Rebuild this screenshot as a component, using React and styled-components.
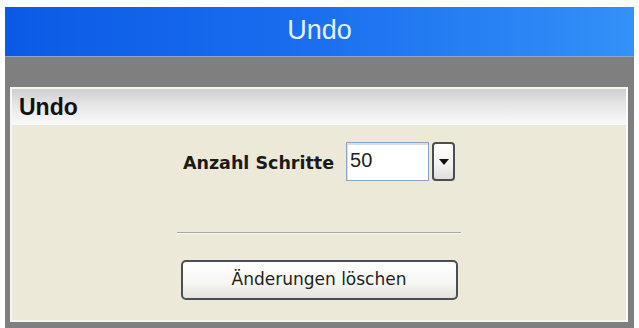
import React from "react";
import styled, { createGlobalStyle } from "styled-components";

const GlobalStyle = createGlobalStyle`
  html, body { margin: 0; padding: 0; background: #ffffff; }
  * { box-sizing: border-box; }
`;

const Frame = styled.div`
  padding: 7px 5px 0 5px;
  width: 639px;
  height: 328px;
`;

const Window = styled.div`
  width: 629px;
  height: 321px;
  background: #7f7f7f;
  display: flex;
  flex-direction: column;
`;

const TitleBar = styled.div`
  height: 50px;
  flex: none;
  background: linear-gradient(90deg, #0b5ae6 0%, #196cee 45%, #3391f8 100%);
  border-bottom: 1px solid #8fa6c8;
  display: flex;
  align-items: center;
  justify-content: center;
  color: #e4f3ff;
  font-family: "Liberation Sans", Arial, sans-serif;
  font-size: 27px;
  padding-bottom: 2px;
`;

const Body = styled.div`
  flex: 1;
  padding: 30px 6px 6px 5px;
  display: flex;
`;

const Panel = styled.section`
  flex: 1;
  background: #ece9d8;
  border: 2px solid #f6f6f2;
  border-right-color: #fbfbf8;
  display: flex;
  flex-direction: column;
`;

const PanelHeader = styled.div`
  height: 36px;
  flex: none;
  background: linear-gradient(180deg, #cfcfcf 0%, #e6e6e6 45%, #fafafa 100%);
  display: flex;
  align-items: center;
  padding-left: 7px;
  font-family: "Liberation Sans", Arial, sans-serif;
  font-weight: bold;
  font-size: 23px;
  color: #111;
`;

const Content = styled.div`
  flex: 1;
  display: flex;
  flex-direction: column;
  align-items: center;
  padding-top: 17px;
`;

const Row = styled.div`
  display: flex;
  align-items: center;
`;

const Label = styled.label`
  font-family: "DejaVu Sans", Tahoma, sans-serif;
  font-weight: bold;
  font-size: 17.5px;
  color: #1a1a1a;
  margin-right: 12px;
  margin-top: 2px;
`;

const Input = styled.div`
  width: 83px;
  height: 39px;
  background: #ffffff;
  border: 1px solid #8ea4be;
  box-shadow: inset 1px 2px 0 #d8dde6;
  padding: 6px 0 0 3px;
  font-family: "Liberation Sans", Arial, sans-serif;
  font-size: 20px;
  color: #222;
`;

const DropButton = styled.div`
  width: 23px;
  height: 39px;
  margin-left: 3px;
  border: 2px solid #4a4d52;
  border-radius: 4px;
  background: linear-gradient(180deg, #ffffff 0%, #f2f2f2 60%, #dedede 100%);
  display: flex;
  align-items: center;
  justify-content: center;
`;

const Separator = styled.hr`
  width: 284px;
  margin: 51px 0 0 0;
  border: none;
  border-top: 1px solid #a7a69c;
  border-bottom: 1px solid #faf9f2;
  height: 0;
`;

const Button = styled.button`
  width: 277px;
  height: 40px;
  margin-top: 26px;
  border: 2px solid #4c4f52;
  border-radius: 5px;
  background: linear-gradient(180deg, #ffffff 0%, #f7f7f4 55%, #e4e3dc 100%);
  font-family: "DejaVu Sans", Tahoma, sans-serif;
  font-size: 17px;
  color: #1e1e1e;
  padding: 0 0 2px 0;
`;

export default function App() {
  return (
    <>
      <GlobalStyle />
      <Frame>
        <Window>
          <TitleBar>Undo</TitleBar>
          <Body>
            <Panel>
              <PanelHeader>Undo</PanelHeader>
              <Content>
                <Row>
                  <Label>Anzahl Schritte</Label>
                  <Input>50</Input>
                  <DropButton>
                    <svg width="10" height="6" viewBox="0 0 10 6">
                      <path d="M0 0 H10 L5 6 Z" fill="#111" />
                    </svg>
                  </DropButton>
                </Row>
                <Separator />
                <Button>Änderungen löschen</Button>
              </Content>
            </Panel>
          </Body>
        </Window>
      </Frame>
    </>
  );
}
